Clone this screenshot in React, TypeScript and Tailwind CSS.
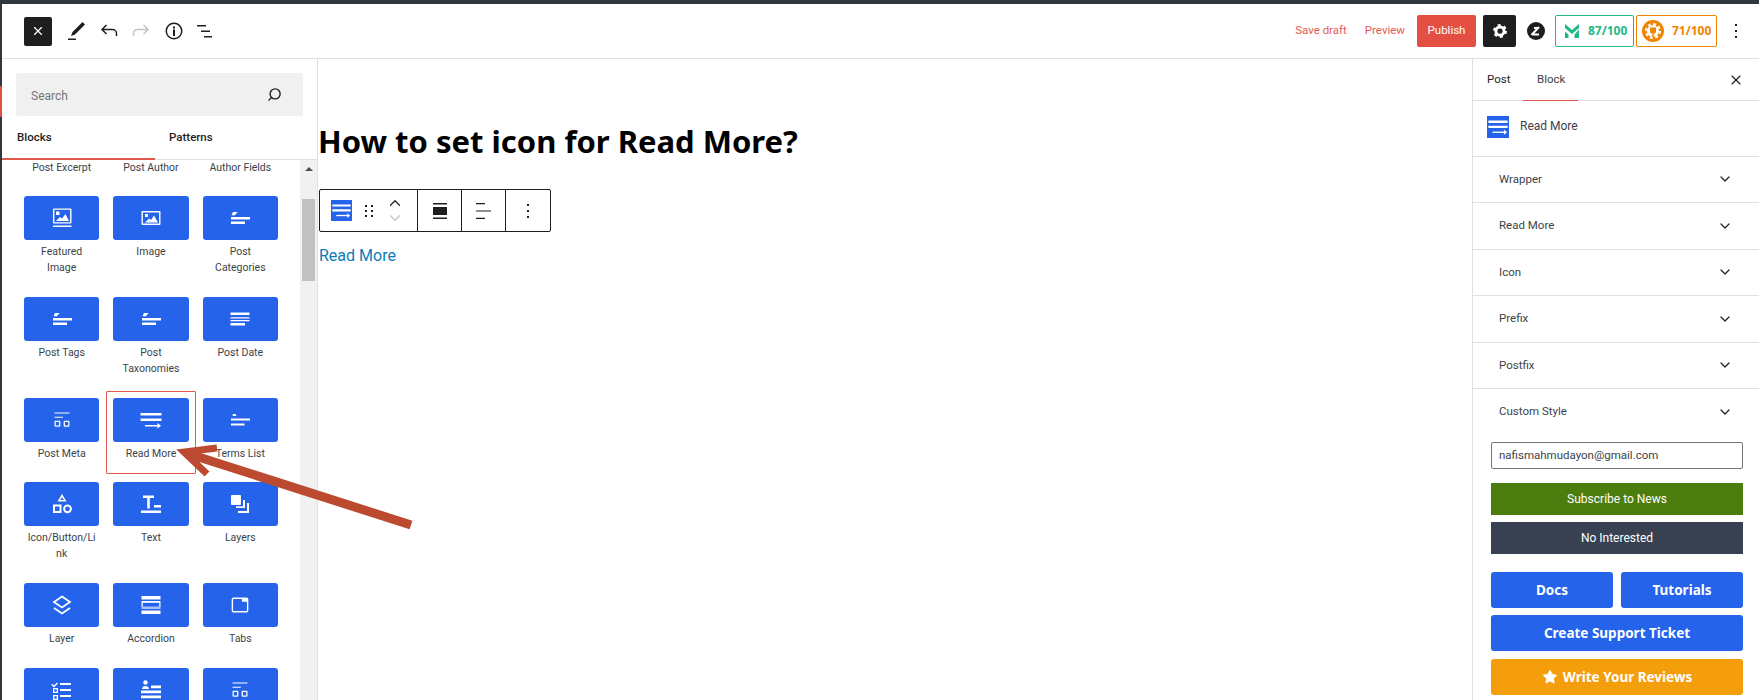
import type { ReactNode } from "react";
import { ChevronDown, ChevronUp, Search, Star, X } from "lucide-react";

const Ico = ({ children, size = 24 }: { children: ReactNode; size?: number }) => (
  <svg width={size} height={size} viewBox="0 0 24 24" fill="currentColor">
    {children}
  </svg>
);

const ReadMoreLines = () => (
  <>
    <path d="M1.500 5h21v2.500h-21zM1.500 10.500h21V13h-21z" />
    <path d="M6 17h14v1.500H6z" />
    <path d="M18.500 15l3.500 2.800-3.500 2.700z" />
  </>
);

const icons: Record<string, ReactNode> = {
  featured: (
    <Ico>
      <path fillRule="evenodd" d="M4 2.500h16.500a1 1 0 0 1 1 1v13a1 1 0 0 1-1 1H4a1 1 0 0 1-1-1v-13a1 1 0 0 1 1-1zm.4 1.300v12.400h15.700V3.800z" />
      <path d="M6 15l4-4 2 1.500 3.500-4.500 3.500 7zM6 5.500h3.500V9H6z" />
      <path d="M3 19.500h18.500v1.500H3z" />
    </Ico>
  ),
  image: (
    <Ico>
      <path fillRule="evenodd" d="M3.500 5h17a1 1 0 0 1 1 1v12a1 1 0 0 1-1 1h-17a1 1 0 0 1-1-1V6a1 1 0 0 1 1-1zm.4 1.400v11.200h16.200V6.400z" />
      <path d="M6 16.500l4-4 2 1.500 3-4.500 4 7zM6 8h3v3H6z" />
    </Ico>
  ),
  terms: (
    <Ico>
      <path d="M5 6h4.500l-2.500 3.300H3.500z" />
      <path d="M3 11h19v2.500H3zM3 15.500h14V18H3z" />
    </Ico>
  ),
  termsDot: (
    <Ico>
      <path d="M5 6h2.500l1 2H4.500z" />
      <path d="M3 10.500h19v2H3zM3 15.500h13.500v2H3z" />
    </Ico>
  ),
  date: (
    <Ico>
      <path d="M2.500 5.500h19V8h-19zM2.500 10.200h19v1.300h-19zM2.500 13h19v1.300h-19zM2.500 16h14.500v2.500H2.500z" />
    </Ico>
  ),
  meta: (
    <Ico size={20}>
      <path d="M3 3h18v1.300H3zM3 8h10v1.300H3z" />
      <path fillRule="evenodd" d="M4 13h5a1 1 0 0 1 1 1v5a1 1 0 0 1-1 1H4a1 1 0 0 1-1-1v-5a1 1 0 0 1 1-1zm.5 1.500v4h4v-4zM15 13h5a1 1 0 0 1 1 1v5a1 1 0 0 1-1 1h-5a1 1 0 0 1-1-1v-5a1 1 0 0 1 1-1zm.500 1.500v4h4v-4z" />
    </Ico>
  ),
  readmore: (
    <Ico>
      <ReadMoreLines />
    </Ico>
  ),
  shapes: (
    <Ico>
      <path fillRule="evenodd" d="M12 2l4.500 7.500h-9zm0 3.200L10.200 8h3.600zM3 12.500h8.500V21H3zm2 2V19h4.500v-4.500z" />
      <circle cx="17.500" cy="16.800" r="3.400" fill="none" stroke="currentColor" strokeWidth="2" />
    </Ico>
  ),
  text: (
    <Ico>
      <path d="M4 3.500h11V6h-4.200v10.500H8.200V6H4zM15 13h7v2.500h-7zM2 18.500h20V21H2z" />
    </Ico>
  ),
  layers: (
    <Ico>
      <rect x="3" y="3" width="10" height="10" rx="1" />
      <path d="M15 8h2v8H8v-1.800h7zM19 11h2v10H10v-2h9z" />
    </Ico>
  ),
  layer: (
    <Ico>
      <path fill="none" stroke="currentColor" strokeWidth="1.800" d="M12 3.500l8 5.500-8 5.500-8-5.500z" />
      <path fill="none" stroke="currentColor" strokeWidth="1.800" d="M4 15l8 5.500 8-5.500" />
    </Ico>
  ),
  accordion: (
    <Ico>
      <path d="M2.500 3h19v3.500h-19zM2.500 17.500h19V21h-19z" />
      <path d="M2.500 8h19v1.800h-19z" />
      <path d="M2.500 13.500h19v2.500h-19z" opacity="0.6" />
      <path d="M2.500 9.800h1.300v4h-1.300zM20.200 9.800h1.300v4h-1.300z" />
    </Ico>
  ),
  tabs: (
    <Ico size={20}>
      <path fillRule="evenodd" d="M4 3h16a2 2 0 0 1 2 2v14a2 2 0 0 1-2 2H4a2 2 0 0 1-2-2V5a2 2 0 0 1 2-2zm-.300 1.700v14.600h16.600V8h-6V4.700z" />
    </Ico>
  ),
  checklist: (
    <Ico>
      <path d="M2.500 6l1.500 1.500 3-3 1 1-4 4-3-3zM10 5h11v2H10zM10 11h11v2H10zM10 17h11v2H10z" />
      <path fillRule="evenodd" d="M3 10h5v5H3zm1.300 1.300v2.400h2.400v-2.400zM3 17h5v5H3zm1.300 1.300v2.400h2.400v-2.400z" />
    </Ico>
  ),
  author: (
    <Ico>
      <circle cx="6.500" cy="4.500" r="2.200" />
      <path d="M3 11c0-2 1.500-3 3.500-3s3.500 1 3.500 3zM12 7.500h10v2.700H12zM2 12.500h20v2.700H2zM2 17.500h20v2.700H2z" />
    </Ico>
  ),
};

const rows = [
  { label: "Featured\nImage", icon: "featured" },
  { label: "Image", icon: "image" },
  { label: "Post\nCategories", icon: "terms" },
  { label: "Post Tags", icon: "terms" },
  { label: "Post\nTaxonomies", icon: "terms" },
  { label: "Post Date", icon: "date" },
  { label: "Post Meta", icon: "meta" },
  { label: "Read More", icon: "readmore", active: true },
  { label: "Terms List", icon: "termsDot" },
  { label: "Icon/Button/Li\nnk", icon: "shapes" },
  { label: "Text", icon: "text" },
  { label: "Layers", icon: "layers" },
  { label: "Layer", icon: "layer" },
  { label: "Accordion", icon: "accordion" },
  { label: "Tabs", icon: "tabs" },
  // last row runs off the bottom of the window, labels are not visible
  { label: "", icon: "checklist" },
  { label: "", icon: "author" },
  { label: "", icon: "meta" },
];

function BlockCard({ label, icon, active }: { label: string; icon: string; active?: boolean }) {
  return (
    <div className="relative flex flex-col min-w-0">
      {active && (
        <span className="absolute -top-[7px] -left-[7px] -right-[7px] h-[83px] border-[1.5px] border-[#e0584e] rounded-[1px]" />
      )}
      <div className="h-[44px] bg-[#2563eb] rounded-[3px] flex items-center justify-center text-white">
        {icons[icon]}
      </div>
      {label && (
        <div className="mt-[4px] text-[10.500px] leading-[16px] text-center text-[#3c434a] whitespace-pre-line">{label}</div>
      )}
    </div>
  );
}

function LeftPanel() {
  return (
    <aside className="w-[316px] shrink-0 border-r border-[#e0e0e0] flex flex-col overflow-hidden">
      <div className="px-[14px] pt-[14px]">
        <div className="w-[287px] h-[43px] bg-[#f0f0f0] rounded-[2px] flex items-center justify-between pl-[15px] pr-[21px]">
          <span className="pt-[2px] text-[12px] text-[#757575]">Search</span>
          <Search size={15} strokeWidth={2.2} className="text-[#1e1e1e] -scale-x-100" />
        </div>
      </div>
      <div className="h-[44px] shrink-0 border-b border-[#e0e0e0] relative flex items-center text-[11.500px] font-medium text-[#1e1e1e]">
        <span className="pl-[15px] w-[167px]">Blocks</span>
        <span>Patterns</span>
        <span className="absolute left-0 -bottom-px w-[153px] h-[2px] bg-[#e0584e]" />
      </div>
      <div className="flex-1 flex min-h-0">
        <div className="flex-1 min-w-0 overflow-hidden pl-[22px]">
          <div className="w-[254px] grid grid-cols-3 gap-x-[14px] text-[10.500px] leading-[16px] text-center text-[#3c434a]">
            <span>Post Excerpt</span>
            <span>Post Author</span>
            <span>Author Fields</span>
          </div>
          <div className="w-[254px] grid grid-cols-3 gap-x-[14px] gap-y-[20.800px] mt-[20px]">
            {rows.map((b, i) => (
              <BlockCard key={i} {...b} />
            ))}
          </div>
        </div>
        <div className="w-[17px] shrink-0 bg-[#f1f1f1] flex flex-col items-center">
          <div className="h-[17px] flex items-center justify-center">
            <div className="w-0 h-0 border-l-[4px] border-r-[4px] border-b-[4px] border-l-transparent border-r-transparent border-b-[#505050]" />
          </div>
          <div className="mt-[22px] w-[13px] h-[82px] bg-[#c1c1c1]" />
        </div>
      </div>
    </aside>
  );
}

function BlockToolbar() {
  return (
    <div className="w-[232px] h-[43px] mt-[27px] border border-[#1e1e1e] rounded-[2px] flex items-stretch text-[#1e1e1e]">
      <div className="w-[98px] border-r border-[#1e1e1e] flex items-center pl-[11px]">
        <div className="w-[21px] h-[21px] bg-[#2563eb] text-white flex items-center justify-center">
          <svg width="21" height="21" viewBox="0 0 24 24" fill="currentColor">
            <ReadMoreLines />
          </svg>
        </div>
        <svg width="10" height="14" viewBox="0 0 10 14" fill="currentColor" className="ml-[12px]">
          <path d="M1 1h2v2H1zM7 1h2v2H7zM1 6h2v2H1zM7 6h2v2H7zM1 11h2v2H1zM7 11h2v2H7z" />
        </svg>
        <div className="ml-[12px] flex flex-col items-center">
          <ChevronUp size={18} strokeWidth={1.6} />
          <ChevronDown size={18} strokeWidth={1.6} className="-mt-[3px] text-[#c4c4c4]" />
        </div>
      </div>
      <div className="w-[44px] border-r border-[#1e1e1e] flex items-center justify-center">
        <svg width="14" height="16" viewBox="0 0 14 16" fill="currentColor">
          <path d="M0 0h14v1.500H0zM0 4h14v8H0zM0 14.500h14V16H0z" />
        </svg>
      </div>
      <div className="w-[44px] border-r border-[#1e1e1e] flex items-center justify-center">
        <svg width="16" height="16" viewBox="0 0 16 16" fill="currentColor">
          <path d="M0 0h9v1.200H0zM0 7.400h15v1.200H0zM0 14.800h9V16H0z" />
        </svg>
      </div>
      <div className="flex-1 flex items-center justify-center">
        <svg width="4" height="14" viewBox="0 0 4 14" fill="currentColor">
          <path d="M1 0h2v2H1zM1 6h2v2H1zM1 12h2v2H1z" />
        </svg>
      </div>
    </div>
  );
}

const panels = ["Wrapper", "Read More", "Icon", "Prefix", "Postfix", "Custom Style"];

function RightPanel() {
  return (
    <aside className="w-[287px] shrink-0 border-l border-[#e0e0e0] flex flex-col overflow-hidden">
      <div className="h-[42px] shrink-0 border-b border-[#e0e0e0] relative flex items-center text-[11.500px] text-[#1e1e1e] pl-[14px] pr-[15px]">
        <span className="w-[50px]">Post</span>
        <span className="text-[#3c434a]">Block</span>
        <X size={16} strokeWidth={1.6} className="ml-auto" />
        <span className="absolute left-[50px] -bottom-px w-[55px] h-px bg-[#e0584e]" />
      </div>
      <div className="h-[54.500px] shrink-0 flex items-start pt-[15px] pl-[14px] gap-[11px] text-[12px] text-[#3c434a]">
        <div className="w-[22px] h-[22px] bg-[#2563eb] text-white">
          <svg width="22" height="22" viewBox="0 0 24 24" fill="currentColor">
            <ReadMoreLines />
          </svg>
        </div>
        <span className="leading-[20px]">Read More</span>
      </div>
      {panels.map((p) => (
        <div
          key={p}
          className="h-[46.500px] shrink-0 border-t border-[#e0e0e0] flex items-center justify-between pl-[26px] pr-[26px] text-[11.500px] text-[#3c434a]"
        >
          <span>{p}</span>
          <ChevronDown size={16} strokeWidth={1.8} className="text-[#1e1e1e]" />
        </div>
      ))}
      <div className="pl-[18px] pr-[16px] mt-[7.500px] flex flex-col">
        <div className="h-[27px] border border-[#757575] rounded-[2px] flex items-center pl-[7px] text-[11.500px] text-[#3c434a]">
          nafismahmudayon@gmail.com
        </div>
        <div className="mt-[14px] h-[32px] bg-[#4d7c0f] text-white text-[12px] flex items-center justify-center">
          Subscribe to News
        </div>
        <div className="mt-[7px] h-[32px] bg-[#374151] text-white text-[12px] flex items-center justify-center">
          No Interested
        </div>
        <div className="mt-[18px] grid grid-cols-2 gap-x-[8px] text-white text-[13.500px] font-bold font-['Noto_Sans',sans-serif]">
          <div className="h-[36px] bg-[#2563eb] rounded-[3px] flex items-center justify-center">Docs</div>
          <div className="h-[36px] bg-[#2563eb] rounded-[3px] flex items-center justify-center">Tutorials</div>
        </div>
        <div className="mt-[7px] h-[36px] bg-[#2563eb] rounded-[3px] text-white text-[13.500px] font-bold font-['Noto_Sans',sans-serif] flex items-center justify-center">
          Create Support Ticket
        </div>
        <div className="mt-[8px] h-[36px] bg-[#f59e0b] rounded-[3px] text-white text-[13.500px] font-bold font-['Noto_Sans',sans-serif] flex items-center justify-center gap-[5px]">
          <Star size={16} fill="currentColor" strokeWidth={1} />
          Write Your Reviews
        </div>
      </div>
    </aside>
  );
}

function TopBar() {
  return (
    <header className="h-[55px] shrink-0 border-b border-[#e0e0e0] flex items-center pl-[22px] pr-[21px]">
      <div className="w-[28px] h-[29px] bg-[#1e1e1e] rounded-[2px] flex items-center justify-center text-white">
        <X size={14} strokeWidth={2} />
      </div>
      <div className="ml-[12px] flex items-center text-[#1e1e1e] gap-[8.500px]">
        <svg width="24" height="24" viewBox="0 0 24 24" fill="currentColor">
          <path d="M18.500 3l2.500 2.500L11 15.500l-4 1.500 1.500-4zM4 19.500h8V21H4z" />
        </svg>
        <svg width="24" height="24" viewBox="0 0 24 24" fill="none" stroke="currentColor" strokeWidth="1.500">
          <path d="M19.500 17v-2.500a4 4 0 0 0-4-4H5M9.500 6L5 10.500 9.500 15" />
        </svg>
        <svg width="24" height="24" viewBox="0 0 24 24" fill="none" stroke="#c4c4c4" strokeWidth="1.500">
          <path d="M4.500 17v-2.500a4 4 0 0 1 4-4H19M14.500 6L19 10.500 14.500 15" />
        </svg>
        <svg width="24" height="24" viewBox="0 0 24 24" fill="currentColor">
          <path fillRule="evenodd" d="M12 3.500a8.500 8.500 0 1 1 0 17 8.500 8.500 0 0 1 0-17zM12 5a7 7 0 1 0 0 14 7 7 0 0 0 0-14z" />
          <path d="M11 10.500h2V17h-2zM11 7.500h2v2h-2z" />
        </svg>
        <svg width="24" height="24" viewBox="0 0 24 24" fill="currentColor">
          <path d="M3 6h9v1.500H3zM7 11.500h9V13H7zM10 17h8v1.500h-8z" />
        </svg>
      </div>
      <div className="ml-auto flex items-center text-[11.500px]">
        <span className="text-[#e55a52]">Save draft</span>
        <span className="ml-[18px] text-[#e55a52]">Preview</span>
        <div className="ml-[12px] w-[59px] h-[32px] bg-[#e34f43] rounded-[2px] text-white flex items-center justify-center">
          Publish
        </div>
        <div className="ml-[7px] w-[33px] h-[32px] bg-[#1e1e1e] rounded-[2px] flex items-center justify-center">
          <svg width="14" height="14" viewBox="0 0 24 24">
            <circle cx="12" cy="12" r="7" fill="none" stroke="#fff" strokeWidth="5" />
            <circle cx="12" cy="12" r="10" fill="none" stroke="#fff" strokeWidth="4" strokeDasharray="5 5.470" />
          </svg>
        </div>
        <svg width="20" height="20" viewBox="0 0 20 20" className="ml-[10px]">
          <circle cx="10" cy="10" r="9" fill="#1e1e1e" />
          <path d="M5.500 14L13 6M8 7h5M7 13.500h6" stroke="#fff" strokeWidth="2" fill="none" />
        </svg>
        <div className="ml-[9px] w-[79px] h-[32px] border border-[#1fb885] rounded-[2px] flex items-center pl-[8px] gap-[8px] text-[12px] font-bold font-['Noto_Sans',sans-serif] text-[#1fb885]">
          <svg width="16" height="16" viewBox="0 0 16 16" fill="#1fb885">
            <path d="M1 1l7 6 7-6v4l-7 6-7-6z" />
            <path d="M1 8.500l3.500 3V15H1zM15 6.500V15h-4.500v-3.500z" />
          </svg>
          87/100
        </div>
        <div className="ml-[2px] w-[81px] h-[32px] border border-[#f08400] rounded-[2px] flex items-center pl-[5px] gap-[8px] text-[12px] font-bold font-['Noto_Sans',sans-serif] text-[#f08400]">
          <svg width="22" height="22" viewBox="0 0 22 22">
            <circle cx="11" cy="11" r="11" fill="#f08400" />
            <circle cx="11" cy="11" r="6" fill="#fff" />
            <circle cx="11" cy="11" r="7" fill="none" stroke="#fff" strokeWidth="2" strokeDasharray="3 2.500" />
            <path d="M8 7.500v3.500a3 3 0 0 0 6 0V7.500zM10.200 13.500h1.600v4h-1.600z" fill="#f08400" />
          </svg>
          71/100
        </div>
        <svg width="4" height="14" viewBox="0 0 4 14" fill="#1e1e1e" className="ml-[17px]">
          <path d="M1 0h2v2H1zM1 6h2v2H1zM1 12h2v2H1z" />
        </svg>
      </div>
    </header>
  );
}

export default function App() {
  return (
    <div className="relative w-[1759px] h-[700px] overflow-hidden bg-white flex flex-col font-['Roboto',sans-serif]">
      <div className="h-[4px] shrink-0 bg-[#32373c]" />
      <div className="flex-1 flex min-h-0">
        <div className="w-[2px] shrink-0 bg-[#32373c] flex flex-col pt-[82px]">
          <div className="h-[31px] bg-[#e34f43]" />
        </div>
        <div className="flex-1 min-w-0 flex flex-col">
          <TopBar />
          <div className="flex-1 flex min-h-0">
            <LeftPanel />
            <main className="flex-1 min-w-0 pl-px pt-[62px]">
              <h1 className="-ml-px text-[31px] leading-[41px] font-bold text-black font-['Noto_Sans',sans-serif]">
                How to set icon for Read More?
              </h1>
              <BlockToolbar />
              <a className="block mt-[13px] text-[16px] leading-[22px] text-[#0a7db8]">Read More</a>
            </main>
            <RightPanel />
          </div>
        </div>
      </div>
      <svg className="absolute left-0 top-0 pointer-events-none" width="1759" height="700" fill="none" stroke="#bb4a30">
        <path d="M411 525L186 453" strokeWidth="9" />
        <path d="M217 448L184 452L207 474" strokeWidth="7" />
      </svg>
    </div>
  );
}
